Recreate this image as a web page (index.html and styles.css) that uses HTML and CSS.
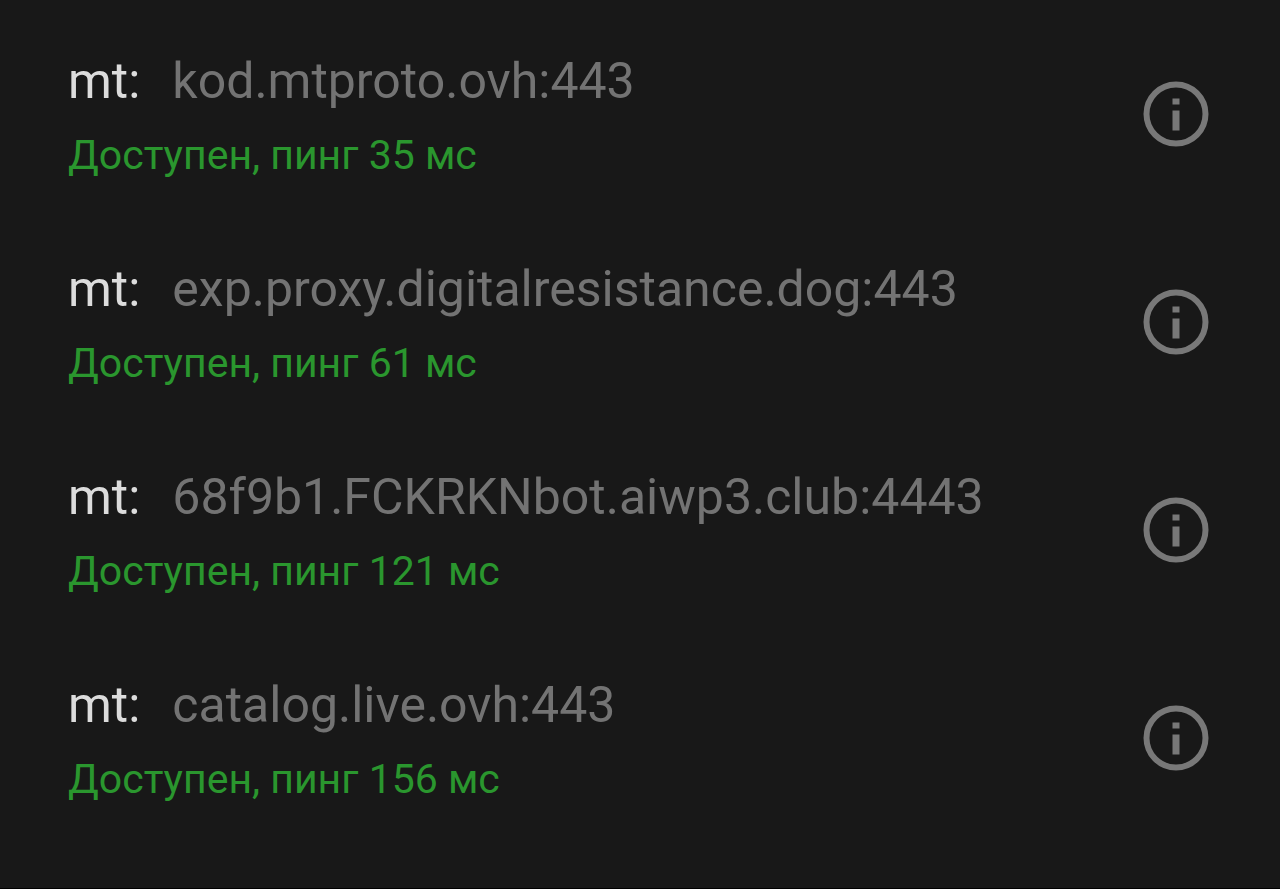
FILE: index.html
```html
<!DOCTYPE html>
<html lang="ru">
<head>
    <meta charset="UTF-8" />
    <meta name="viewport" content="width=device-width, initial-scale=1.0"/>
    <title>Прокси</title>
    <link rel="stylesheet" href="styles.css">
</head>
<body>

    <ul class="proxy-list">
        <li class="proxy">
            <div class="proxy-text">
                <div class="address"><span class="type">mt:</span><span class="host">kod.mtproto.ovh:443</span></div>
                <div class="status">Доступен, пинг 35 мс</div>
            </div>
            <button class="info" type="button" aria-label="Информация">
                <svg viewBox="0 0 66 66"><circle cx="33" cy="33" r="29.5"/><path d="M29.5 17.5h7v6h-7zM29.5 29.5h7v20h-7z"/></svg>
            </button>
        </li>
        <li class="proxy">
            <div class="proxy-text">
                <div class="address"><span class="type">mt:</span><span class="host">exp.proxy.digitalresistance.dog:443</span></div>
                <div class="status">Доступен, пинг 61 мс</div>
            </div>
            <button class="info" type="button" aria-label="Информация">
                <svg viewBox="0 0 66 66"><circle cx="33" cy="33" r="29.5"/><path d="M29.5 17.5h7v6h-7zM29.5 29.5h7v20h-7z"/></svg>
            </button>
        </li>
        <li class="proxy">
            <div class="proxy-text">
                <div class="address"><span class="type">mt:</span><span class="host">68f9b1.FCKRKNbot.aiwp3.club:4443</span></div>
                <div class="status">Доступен, пинг 121 мс</div>
            </div>
            <button class="info" type="button" aria-label="Информация">
                <svg viewBox="0 0 66 66"><circle cx="33" cy="33" r="29.5"/><path d="M29.5 17.5h7v6h-7zM29.5 29.5h7v20h-7z"/></svg>
            </button>
        </li>
        <li class="proxy">
            <div class="proxy-text">
                <div class="address"><span class="type">mt:</span><span class="host">catalog.live.ovh:443</span></div>
                <div class="status">Доступен, пинг 156 мс</div>
            </div>
            <button class="info" type="button" aria-label="Информация">
                <svg viewBox="0 0 66 66"><circle cx="33" cy="33" r="29.5"/><path d="M29.5 17.5h7v6h-7zM29.5 29.5h7v20h-7z"/></svg>
            </button>
        </li>
    </ul>

</body>
</html>
```

FILE: styles.css
```css
* {
    margin: 0;
    padding: 0;
    box-sizing: border-box;
}

body {
    font-family: Roboto, sans-serif;
    background-color: #181818;
}

.proxy-list {
    list-style: none;
    padding: 10px 71px 46px 68px;
    border-bottom: 1px solid #000;
}

.proxy {
    display: flex;
    justify-content: space-between;
    align-items: center;
    min-height: 208px;
}

.proxy-text {
    padding-top: 8px;
    line-height: 74px;
}

.address {
    display: flex;
    gap: 32px;
    font-size: 50px;
}

.type {
    color: #dcdcdc;
}

.host {
    color: #737373;
}

.status {
    font-size: 41px;
    color: #2a962e;
}

.info {
    width: 66px;
    height: 66px;
    background: none;
    border: none;
    cursor: pointer;
}

.info svg {
    display: block;
    fill: #787878;
}

.info circle {
    fill: none;
    stroke: #787878;
    stroke-width: 6;
}
```
